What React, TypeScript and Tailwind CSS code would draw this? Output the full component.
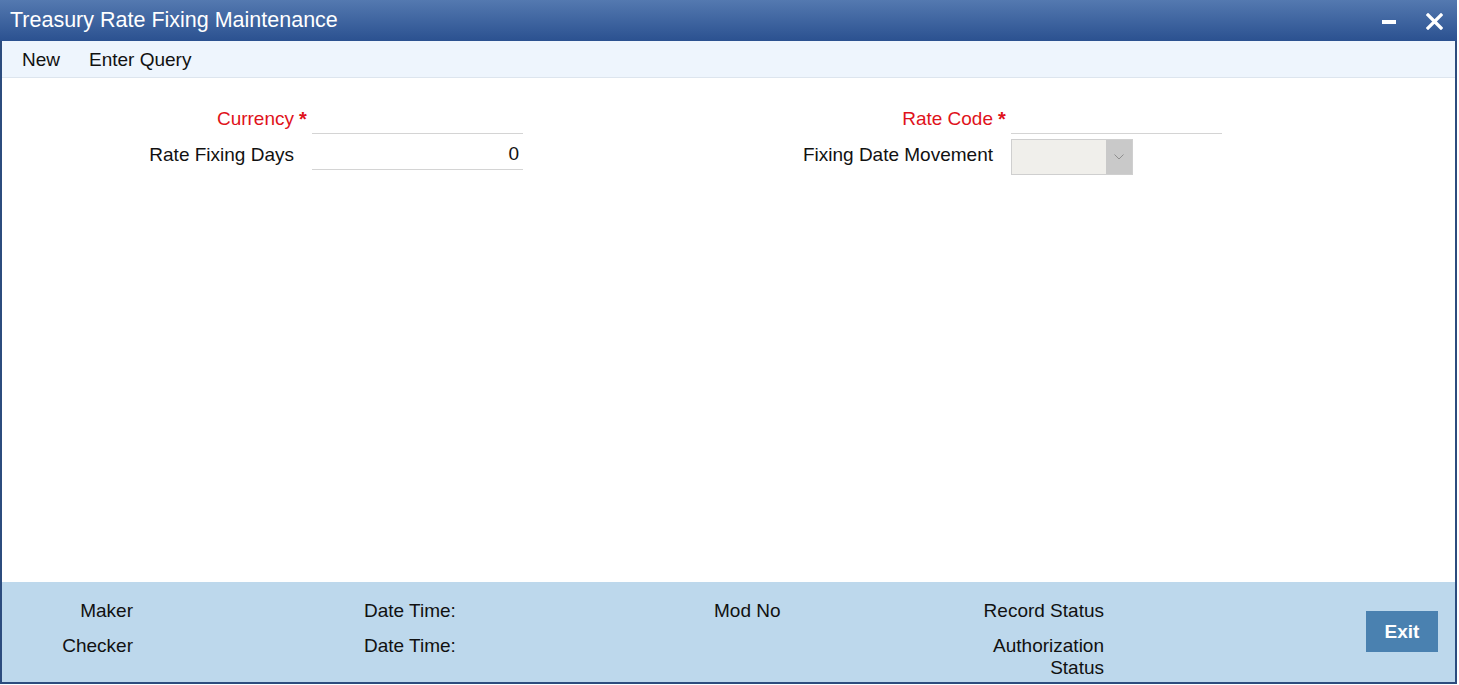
import React from "react";

const font = { fontFamily: '"Liberation Sans", Arial, sans-serif' };

function FieldLabel({ text, required }: { text: string; required?: boolean }) {
  return (
    <>
      <div className={`text-right text-[19px] leading-[22px] ${required ? "text-[#e0121b]" : "text-[#111]"}`}>{text}</div>
      <div className="w-[18px] pl-[5px] self-start pt-[4px] text-[#e0121b] text-[20px] font-bold leading-[22px]">{required ? "*" : ""}</div>
    </>
  );
}

export default function App() {
  return (
    <div className="w-[1458px] h-[685px] bg-white" style={font}>
      <div className="w-[1457px] h-[684px] flex flex-col border-l-2 border-r-2 border-b-2 border-[#2c4c7e]">
        {/* Title bar */}
        <div className="h-[41px] shrink-0 flex items-center bg-gradient-to-b from-[#5479b0] to-[#2b5190] pl-[8px] pr-[14px] -mx-[2px]">
          <div className="text-white text-[21.5px] leading-none pl-[2px]">Treasury Rate Fixing Maintenance</div>
          <div className="ml-auto flex items-center gap-[30px]">
            <div className="w-[14px] h-[4px] bg-white mt-[2px]" />
            <svg width="17" height="17" viewBox="0 0 17 17" className="mt-[1px]">
              <path d="M2 2 L15 15 M15 2 L2 15" stroke="white" strokeWidth="3.2" strokeLinecap="square" />
            </svg>
          </div>
        </div>
        {/* Toolbar */}
        <div className="h-[37px] shrink-0 flex items-center bg-[#eef5fd] border-b border-[#dde5ee] text-[19px] text-[#111] pt-[3px]">
          <span className="ml-[20px]">New</span>
          <span className="ml-[29px]">Enter Query</span>
        </div>
        {/* Form */}
        <div className="flex-1 flex pt-[26px]">
          <div className="grid grid-cols-[292px_18px_211px] grid-rows-[30px_30px] gap-y-[6px] items-center">
            <FieldLabel text="Currency" required />
            <div className="h-[30px] border-b border-[#d4d4d4]" />
            <FieldLabel text="Rate Fixing Days" />
            <div className="h-[30px] border-b border-[#d4d4d4] flex items-center justify-end pr-[4px] text-[19px] text-[#111]">0</div>
          </div>
          <div className="grid grid-cols-[470px_18px_211px] grid-rows-[30px_30px] gap-y-[6px] items-center">
            <FieldLabel text="Rate Code" required />
            <div className="h-[30px] border-b border-[#d4d4d4]" />
            <FieldLabel text="Fixing Date Movement" />
            <div className="w-[122px] h-[36px] mt-[3px] flex border border-[#cfcfcf] bg-[#f0efeb]">
              <div className="flex-1" />
              <div className="w-[26px] bg-[#c9c9c9] flex items-center justify-center">
                <svg width="10" height="6" viewBox="0 0 10 6">
                  <path d="M0.5 0.5 L5 5 L9.5 0.5" stroke="#8f8f8f" strokeWidth="1" fill="none" />
                </svg>
              </div>
            </div>
          </div>
        </div>
        {/* Footer */}
        <div className="h-[100px] shrink-0 bg-[#bdd8ec] flex text-[19px] leading-[22px] text-[#111] pt-[18px]">
          <div className="w-[131px] flex flex-col gap-[13px] text-right">
            <div>Maker</div>
            <div>Checker</div>
          </div>
          <div className="ml-[231px] w-[350px] flex flex-col gap-[13px]">
            <div>Date Time:</div>
            <div>Date Time:</div>
          </div>
          <div className="w-[250px] flex flex-col gap-[13px]">
            <div>Mod No</div>
          </div>
          <div className="w-[140px] flex flex-col gap-[13px] text-right">
            <div>Record Status</div>
            <div>Authorization Status</div>
          </div>
          <div className="ml-[262px] mt-[11px] w-[72px] h-[41px] bg-[#4a81b0] text-white font-bold text-[19px] flex items-center justify-center">
            Exit
          </div>
        </div>
      </div>
    </div>
  );
}
